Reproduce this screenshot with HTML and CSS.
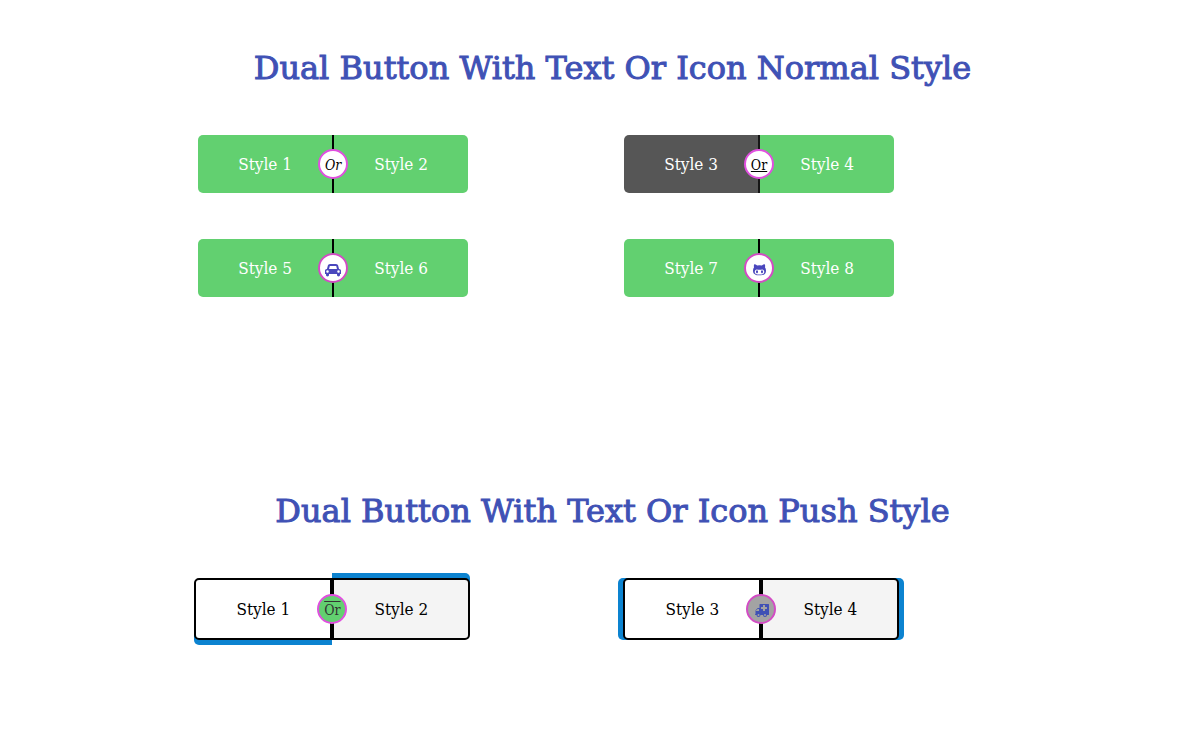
FILE: index.html
```html
<!DOCTYPE html>
<html lang="en">
<head>
<meta charset="utf-8">
<title>Dual Buttons</title>
<meta name="viewport" content="width=device-width, initial-scale=1">
<link rel="stylesheet" href="styles.css">
</head>
<body>
<main class="page">
  <section class="section">
    <h1 class="title">Dual Button With Text Or Icon Normal Style</h1>
    <div class="grid">
      <div class="dual">
        <a class="half first" href="#">Style 1</a>
        <a class="half" href="#">Style 2</a>
        <span class="badge italic">Or</span>
      </div>
      <div class="dual">
        <a class="half first dark" href="#">Style 3</a>
        <a class="half" href="#">Style 4</a>
        <span class="badge underline">Or</span>
      </div>
      <div class="dual">
        <a class="half first" href="#">Style 5</a>
        <a class="half" href="#">Style 6</a>
        <span class="badge icon-badge"><svg class="icon" viewBox="0 0 2048 1792" aria-hidden="true"><path d="M480 1088q0-66-47-113t-113-47-113 47-47 113 47 113 113 47 113-47 47-113zm36-320h1016l-89-357q-2-8-14-17.5t-21-9.5h-768q-9 0-21 9.5t-14 17.5zm1372 320q0-66-47-113t-113-47-113 47-47 113 47 113 113 47 113-47 47-113zm160-96v384q0 14-9 23t-23 9h-96v128q0 80-56 136t-136 56-136-56-56-136v-128h-1024v128q0 80-56 136t-136 56-136-56-56-136v-128h-96q-14 0-23-9t-9-23v-384q0-93 65.5-158.5t158.5-65.5h28l105-419q23-94 104-157.5t179-63.5h768q98 0 179 63.5t104 157.5l105 419h28q93 0 158.5 65.5t65.5 158.5z"/></svg></span>
      </div>
      <div class="dual">
        <a class="half first" href="#">Style 7</a>
        <a class="half" href="#">Style 8</a>
        <span class="badge icon-badge"><svg class="icon" viewBox="0 0 1664 1792" aria-hidden="true"><path d="M640 1120q0 40-12.5 82t-43 76-72.5 34-72.5-34-43-76-12.5-82 12.5-82 43-76 72.5-34 72.5 34 43 76 12.5 82zm640 0q0 40-12.5 82t-43 76-72.5 34-72.5-34-43-76-12.5-82 12.5-82 43-76 72.5-34 72.5 34 43 76 12.5 82zm160 0q0-120-69-204t-187-84q-41 0-195 21-71 11-157 11t-157-11q-152-21-195-21-118 0-187 84t-69 204q0 88 32 153.5t81 103 122 60 140 29.5 149 7h168q82 0 149-7t140-29.5 122-60 81-103 32-153.5zm224-176q0 207-61 331-38 77-105.5 133t-141 86-170 47.5-171.5 22-167 4.5q-78 0-142-3t-147.5-12.5-152.5-30-137-51.5-121-81-86-115q-62-123-62-331 0-237 136-396-27-82-27-170 0-116 51-218 108 0 190 39.5t189 123.5q147-35 309-35 148 0 280 32 105-82 187-121t189-39q51 102 51 218 0 87-27 168 136 160 136 398z"/></svg></span>
      </div>
    </div>
  </section>

  <section class="section">
    <h1 class="title">Dual Button With Text Or Icon Push Style</h1>
    <div class="grid grid-push">
      <div class="dual push push-vertical">
        <a class="half first" href="#">Style 1</a>
        <a class="half" href="#">Style 2</a>
        <span class="badge overline">Or</span>
      </div>
      <div class="dual push push-side">
        <a class="half first" href="#">Style 3</a>
        <a class="half" href="#">Style 4</a>
        <span class="badge icon-badge gray"><svg class="icon" viewBox="0 0 1920 1792" aria-hidden="true"><path fill-rule="evenodd" d="M704 1408a128 128 0 1 0-256 0a128 128 0 1 0 256 0zM256 896h384v-256h-158q-14 2-22 9l-195 195q-7 12-9 22zM1536 1408a128 128 0 1 0-256 0a128 128 0 1 0 256 0zM1664 608v-192q0-32-32-32h-224v-224q0-32-32-32h-192q-32 0-32 32v224h-224q-32 0-32 32v192q0 32 32 32h224v224q0 32 32 32h192q32 0 32-32v-224h224q32 0 32-32zM1920 64v1280q0 64-64 64h-192a256 256 0 0 1-512 0h-320a256 256 0 0 1-512 0h-128q-64 0-64-64t64-64v-416q0-58 45-109l198-198q45-45 109-45h160v-448q0-64 64-64h1088q64 0 64 64z"/></svg></span>
      </div>
    </div>
  </section>
</main>
</body>
</html>
```
FILE: styles.css
```css
* {
  box-sizing: border-box;
}

body {
  margin: 0;
  background: #fff;
  font-family: "DejaVu Serif Condensed", "DejaVu Serif", serif;
}

.page {
  padding: 45px 0 48px 40px;
}

.section + .section {
  margin-top: 191px;
}

.title {
  margin: 0 0 44px;
  color: #3f51b5;
  font-family: "DejaVu Serif", serif;
  font-size: 32px;
  font-weight: 400;
  line-height: 46px;
  text-align: center;
  -webkit-text-stroke: 1px #3f51b5;
}

.grid {
  display: grid;
  grid-template-columns: repeat(2, 40%);
  justify-items: center;
  gap: 46px 0;
  margin-left: 7%;
}

.grid-push {
  grid-template-columns: repeat(2, 40.2%);
  margin-left: 6.8%;
}

.dual {
  position: relative;
  display: flex;
  width: 270px;
}

.half {
  flex: 1;
  padding: 17px 8px;
  border-radius: 0 5px 5px 0;
  background: #62d070;
  color: #fff;
  font-size: 17px;
  line-height: 24px;
  text-align: center;
  text-decoration: none;
}

.half.first {
  border-right: 2px solid #000;
  border-radius: 5px 0 0 5px;
}

.half.first.dark {
  border-right-color: #161616;
  background: #565656;
}

.badge {
  position: absolute;
  top: 50%;
  left: 50%;
  display: flex;
  align-items: center;
  justify-content: center;
  width: 30px;
  height: 30px;
  padding-top: 2px;
  border: 2px solid #e04fdf;
  border-radius: 50%;
  background: #fff;
  color: #000;
  font-size: 14px;
  line-height: 20px;
  transform: translate(-50%, -50%);
}

.italic {
  font-style: italic;
}

.underline {
  text-decoration: underline;
}

.overline {
  background: #62d070;
  color: #333;
  text-decoration: overline;
}

.icon-badge {
  padding-top: 4px;
  border-color: #d24cc4;
  color: #4a47bd;
}

.gray {
  background: #a3a3a3;
  color: #3f51b5;
}

.icon {
  height: 14px;
  fill: currentColor;
}

.push {
  width: 276px;
}

.push .half {
  border: 2px solid #000;
  background: #f4f4f4;
  color: #000;
}

.push .half.first {
  background: #fff;
}

.push-vertical .half {
  box-shadow: 0 -5px #0c83d0;
}

.push-vertical .half.first {
  box-shadow: 0 5px #0c83d0;
}

.push-side .half {
  box-shadow: 5px 0 #0c83d0;
}

.push-side .half.first {
  z-index: 1;
  box-shadow: -5px 0 #0c83d0;
}

.push .badge {
  z-index: 2;
}
```
